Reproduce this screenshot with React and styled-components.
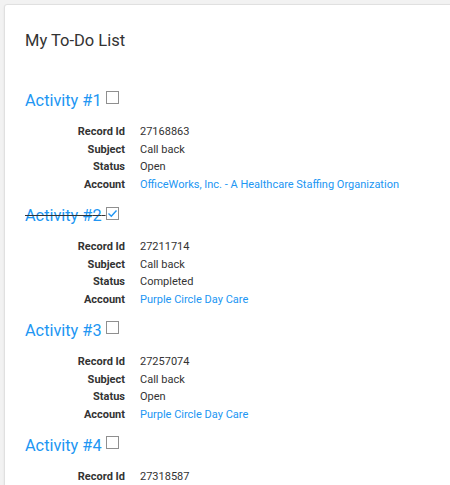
import React, { useState } from 'react';
import styled, { createGlobalStyle } from 'styled-components';

const GlobalStyle = createGlobalStyle`
  html, body {
    margin: 0;
    padding: 0;
    background: #f2f2f2;
    font-family: Roboto, "Liberation Sans", sans-serif;
    color: #333;
    overflow: hidden;
  }
`;

const activities = [
  { id: 1, recordId: '27168863', subject: 'Call back', status: 'Open', account: 'OfficeWorks, Inc. - A Healthcare Staffing Organization', done: false },
  { id: 2, recordId: '27211714', subject: 'Call back', status: 'Completed', account: 'Purple Circle Day Care', done: true },
  { id: 3, recordId: '27257074', subject: 'Call back', status: 'Open', account: 'Purple Circle Day Care', done: false },
  { id: 4, recordId: '27318587', subject: 'Call back', status: 'Open', account: 'Purple Circle Day Care', done: false },
];

function Activity({ item, onToggle }) {
  return (
    <Block>
      <Heading done={item.done}>
        <HeadingLink href="#">Activity #{item.id}</HeadingLink>{' '}
        <Check checked={item.done} onClick={onToggle}>
          {item.done && (
            <svg width="11" height="11" viewBox="0 0 11 11">
              <path d="M1.5 5.5 L4.3 8.2 L9.5 2.5" fill="none" stroke="#2196f3" strokeWidth="1.4" />
            </svg>
          )}
        </Check>
      </Heading>
      <Details>
        <Label>Record Id</Label>
        <Value>{item.recordId}</Value>
        <Label>Subject</Label>
        <Value>{item.subject}</Value>
        <Label>Status</Label>
        <Value>{item.status}</Value>
        <Label>Account</Label>
        <Value><AccountLink href="#">{item.account}</AccountLink></Value>
      </Details>
    </Block>
  );
}

export default function App() {
  const [items, setItems] = useState(activities);
  const toggle = (id) =>
    setItems(items.map((a) => (a.id === id ? { ...a, done: !a.done } : a)));

  return (
    <>
      <GlobalStyle />
      <Card>
        <Title>My To-Do List</Title>
        <List>
          {items.map((a) => (
            <Activity key={a.id} item={a} onToggle={() => toggle(a.id)} />
          ))}
        </List>
      </Card>
    </>
  );
}

const Card = styled.div`
  margin: 4px 0 0 4px;
  width: 470px;
  height: 500px;
  overflow: hidden;
  box-sizing: border-box;
  padding: 24px 20px;
  background: #fff;
  border: 1px solid #e0e0e0;
  border-radius: 3px;
  box-shadow: 0 1px 2px rgba(0, 0, 0, 0.08);
`;

const Title = styled.h2`
  margin: 0 0 36px;
  font-size: 16.5px;
  line-height: 24px;
  font-weight: 400;
  color: #333;
`;

const List = styled.div`
  display: flex;
  flex-direction: column;
`;

const Block = styled.div`
  height: 115px;
  flex-shrink: 0;
`;

const Heading = styled.h3`
  margin: 0 0 10px;
  font-size: 16.3px;
  line-height: 24px;
  font-weight: 400;
  color: #333;
  white-space: nowrap;
  text-decoration: ${(p) => (p.done ? 'line-through' : 'none')};
`;

const HeadingLink = styled.a`
  color: #2196f3;
  text-decoration: none;
`;

const Check = styled.span`
  display: inline-flex;
  align-items: center;
  justify-content: center;
  width: 13px;
  height: 13px;
  vertical-align: 2px;
  box-sizing: border-box;
  border: 1px solid #8f8f8f;
  background: #fff;
  cursor: pointer;
`;

const Details = styled.div`
  display: grid;
  grid-template-columns: 100px 1fr;
  column-gap: 15px;
  font-size: 11px;
  line-height: 17.5px;
`;

const Label = styled.div`
  text-align: right;
  font-weight: 700;
  color: #333;
`;

const Value = styled.div`
  color: #333;
  white-space: nowrap;
`;

const AccountLink = styled.a`
  color: #2196f3;
  text-decoration: none;
`;
